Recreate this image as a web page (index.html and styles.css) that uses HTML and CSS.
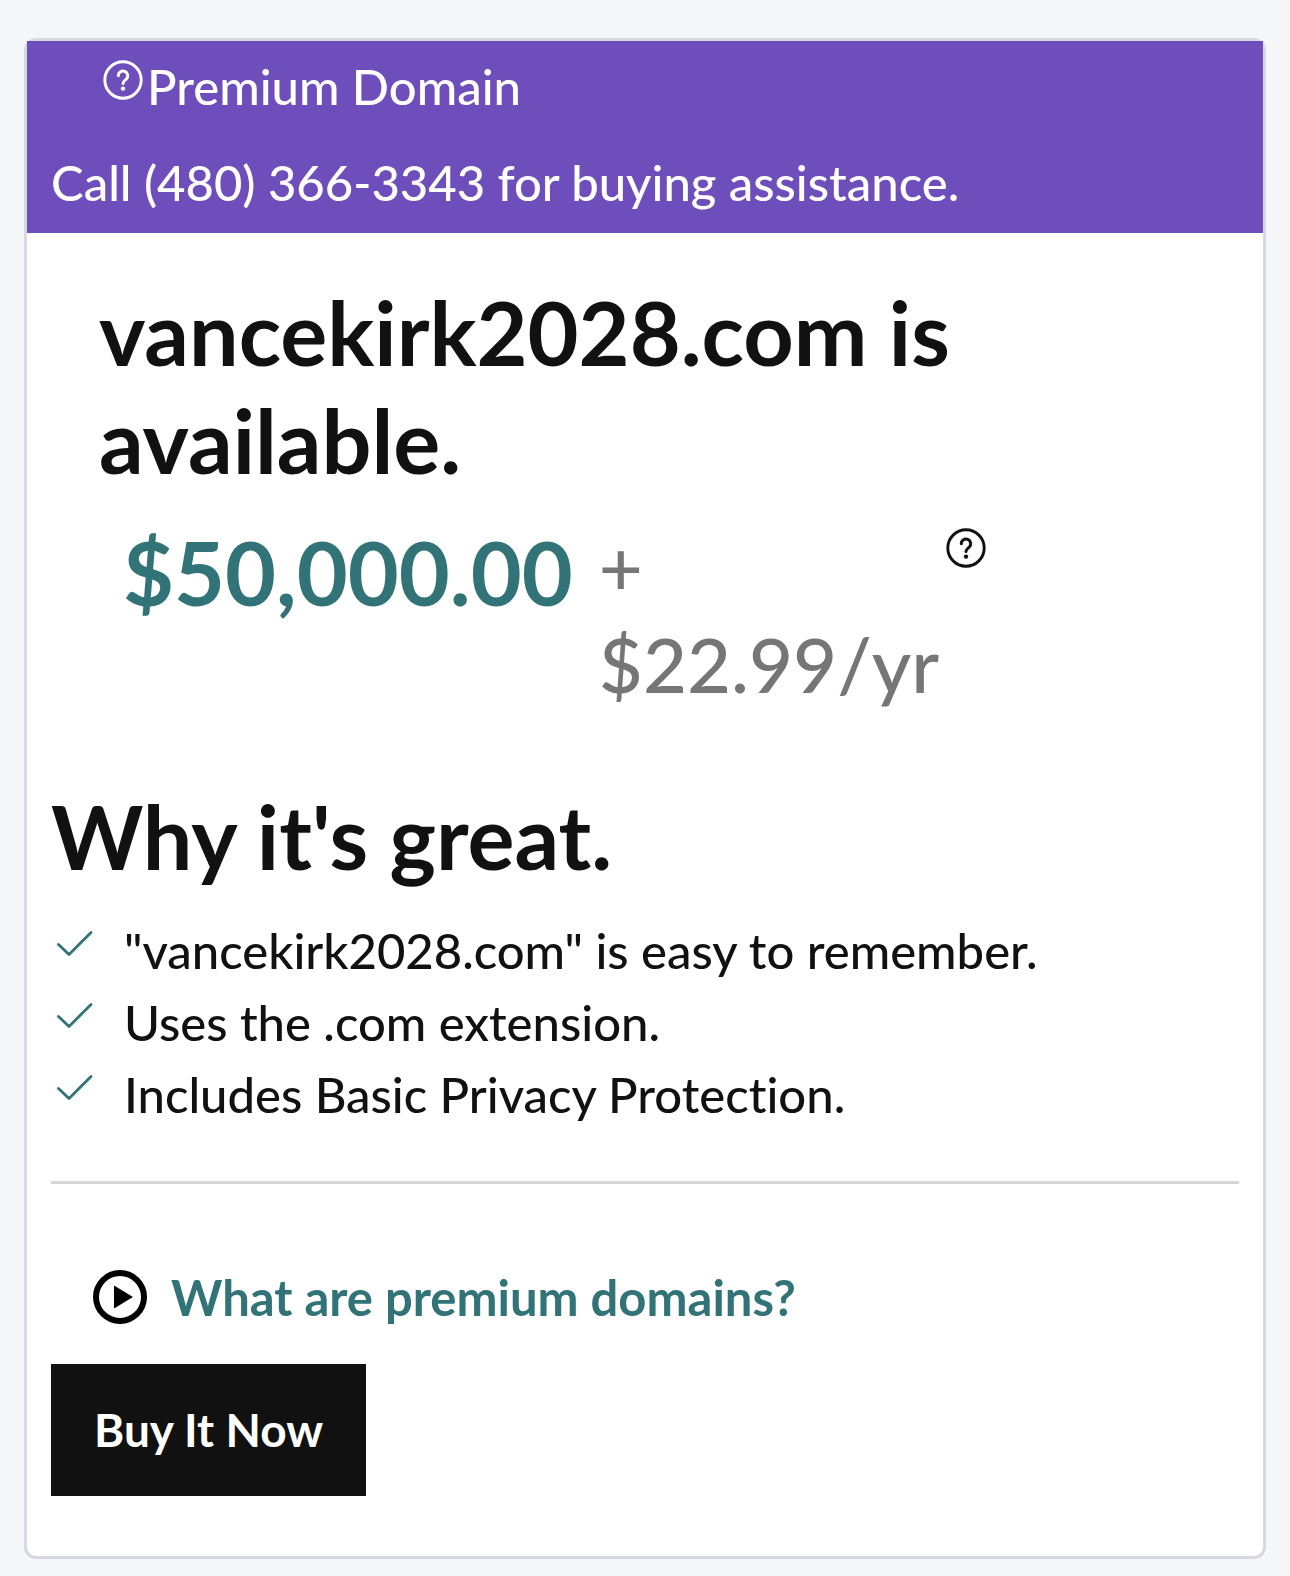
FILE: index.html
```html
<!DOCTYPE html>
<html lang="en">
<head>
<meta charset="utf-8">
<meta name="viewport" content="width=device-width, initial-scale=1">
<title>vancekirk2028.com is available</title>
<link rel="stylesheet" href="styles.css">
</head>
<body>
<main class="card">
  <header class="banner">
    <p class="banner-title">
      <svg class="help-icon" viewBox="0 0 40 40" aria-hidden="true">
        <circle cx="20" cy="20" r="18.2" fill="none" stroke="currentColor" stroke-width="2.9"/>
        <path d="M15.3 15.8a4.7 4.7 0 1 1 7.9 3.4c-1.8 1.5-3.2 2.3-3.2 4.2" fill="none" stroke="currentColor" stroke-width="3" stroke-linecap="round"/>
        <circle cx="20" cy="28.6" r="2.2" fill="currentColor"/>
      </svg>
      <span>Premium Domain</span>
    </p>
    <p class="banner-call">Call (480) 366-3343 for buying assistance.</p>
  </header>
  <div class="content">
    <section class="offer">
      <h1 class="heading">vancekirk2028.com is available.</h1>
      <div class="price-row">
        <span class="price">$50,000.00</span>
        <span class="renewal">+ $22.99/yr</span>
        <button class="help-button" type="button" aria-label="Pricing details">
          <svg class="help-icon" viewBox="0 0 40 40" aria-hidden="true">
            <circle cx="20" cy="20" r="18.2" fill="none" stroke="currentColor" stroke-width="2.9"/>
            <path d="M15.3 15.8a4.7 4.7 0 1 1 7.9 3.4c-1.8 1.5-3.2 2.3-3.2 4.2" fill="none" stroke="currentColor" stroke-width="3" stroke-linecap="round"/>
            <circle cx="20" cy="28.6" r="2.2" fill="currentColor"/>
          </svg>
        </button>
      </div>
    </section>
    <section class="reasons">
      <h2 class="heading">Why it's great.</h2>
      <ul class="reason-list">
        <li class="reason"><svg class="check-icon" viewBox="0 0 36 28" aria-hidden="true"><path d="M1.5 14.5 12 24.5 34 2.5"/></svg>"vancekirk2028.com" is easy to remember.</li>
        <li class="reason"><svg class="check-icon" viewBox="0 0 36 28" aria-hidden="true"><path d="M1.5 14.5 12 24.5 34 2.5"/></svg>Uses the .com extension.</li>
        <li class="reason"><svg class="check-icon" viewBox="0 0 36 28" aria-hidden="true"><path d="M1.5 14.5 12 24.5 34 2.5"/></svg>Includes Basic Privacy Protection.</li>
      </ul>
    </section>
    <hr class="divider">
    <a class="video-link" href="#premium-domains">
      <svg class="play-icon" viewBox="0 0 54 54" aria-hidden="true">
        <circle cx="27" cy="27" r="24" fill="none" stroke="currentColor" stroke-width="6"/>
        <path d="M21 15.5v23L40 27z" fill="currentColor"/>
      </svg>
      <span>What are premium domains?</span>
    </a>
    <button class="buy-button" type="button">Buy It Now</button>
  </div>
</main>
</body>
</html>
```
FILE: styles.css
```css
* {
  box-sizing: border-box;
}

body {
  margin: 0;
  padding: 38px 24px 16px;
  background: #f4f6f8;
  color: #111;
  font-family: Lato, "Open Sans", sans-serif;
  font-size: 49px;
  font-weight: 500;
  font-variant-ligatures: none;
  line-height: 72px;
}

h1, h2, p, ul {
  margin: 0;
  padding: 0;
}

.card {
  background: #fff;
  border: 3px solid #d6d9e0;
  border-radius: 12px;
}

.banner {
  display: flex;
  flex-direction: column;
  gap: 24px;
  padding: 9px 24px 15px;
  background: #6e4eba;
  color: #fff;
}

.banner-title {
  display: flex;
  align-items: flex-start;
  gap: 4px;
  padding-left: 52px;
}

.help-icon {
  display: block;
  flex: none;
  width: 40px;
  height: 40px;
}

.banner-title .help-icon {
  margin-top: 10px;
}

.content {
  padding: 45px 24px 60px;
}

.heading {
  font-size: 88px;
  font-weight: 700;
  line-height: 108px;
}

.offer {
  max-width: 960px;
  padding-left: 48px;
}

.price-row {
  display: flex;
  align-items: flex-start;
  padding: 24px 0 0 24px;
}

.price {
  color: #317377;
  font-size: 88px;
  font-weight: 700;
  line-height: 108px;
}

.renewal {
  width: min-content;
  margin-left: 26px;
  color: #767676;
  font-size: 76px;
  line-height: 97px;
}

.help-button {
  margin: 8px 0 0 7px;
  padding: 2px 0;
  border: 0;
  background: none;
  color: #111;
}

.reasons {
  padding-top: 70px;
}

.reason-list {
  padding-top: 24px;
  list-style: none;
}

.reason {
  display: flex;
  align-items: flex-start;
  gap: 31px;
  padding-left: 6px;
}

.check-icon {
  flex: none;
  width: 36px;
  height: 28px;
  margin-top: 16px;
  fill: none;
  stroke: #317377;
  stroke-width: 2.8;
  stroke-linecap: round;
  stroke-linejoin: round;
}

.divider {
  height: 3px;
  margin: 51px 0 77px;
  border: 0;
  background: #d6d6d6;
}

.video-link {
  display: flex;
  align-items: center;
  gap: 24px;
  width: fit-content;
  padding-left: 42px;
  color: #317377;
  font-weight: 700;
  text-decoration: none;
}

.play-icon {
  flex: none;
  width: 54px;
  height: 54px;
  color: #000;
}

.buy-button {
  display: block;
  margin-top: 31px;
  padding: 30px 43px;
  border: 0;
  background: #111;
  color: #fff;
  font-family: inherit;
  font-size: 46px;
  font-weight: 700;
  line-height: 72px;
}
```
